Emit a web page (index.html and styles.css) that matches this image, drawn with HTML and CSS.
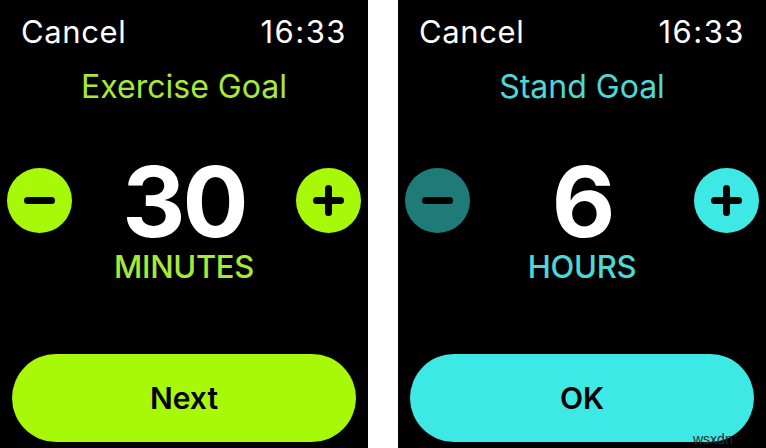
FILE: index.html
```html
<!DOCTYPE html>
<html lang="en">
<head>
    <meta charset="UTF-8">
    <meta name="viewport" content="width=device-width, initial-scale=1.0">
    <title>Activity Goals</title>
    <link rel="stylesheet" href="styles.css">
</head>
<body>
    <div class="screens">
        <!-- exercise goal -->
        <div class="screen exercise">
            <div class="topbar">
                <span class="cancel">Cancel</span>
                <span class="clock">16:33</span>
            </div>
            <div class="goal-title">Exercise Goal</div>
            <div class="stepper">
                <button class="step-btn">
                    <svg viewBox="0 0 65 65" width="65" height="65"><line x1="20.5" y1="32.5" x2="44.5" y2="32.5"/></svg>
                </button>
                <div class="value">30</div>
                <button class="step-btn">
                    <svg viewBox="0 0 65 65" width="65" height="65"><line x1="20.5" y1="32.5" x2="44.5" y2="32.5"/><line x1="32.5" y1="20.5" x2="32.5" y2="44.5"/></svg>
                </button>
            </div>
            <div class="unit">MINUTES</div>
            <button class="action-btn">Next</button>
        </div>

        <!-- stand goal -->
        <div class="screen stand">
            <div class="topbar">
                <span class="cancel">Cancel</span>
                <span class="clock">16:33</span>
            </div>
            <div class="goal-title">Stand Goal</div>
            <div class="stepper">
                <button class="step-btn dim">
                    <svg viewBox="0 0 65 65" width="65" height="65"><line x1="20.5" y1="32.5" x2="44.5" y2="32.5"/></svg>
                </button>
                <div class="value">6</div>
                <button class="step-btn">
                    <svg viewBox="0 0 65 65" width="65" height="65"><line x1="20.5" y1="32.5" x2="44.5" y2="32.5"/><line x1="32.5" y1="20.5" x2="32.5" y2="44.5"/></svg>
                </button>
            </div>
            <div class="unit">HOURS</div>
            <button class="action-btn">OK</button>
            <span class="watermark">wsxdn</span>
        </div>
    </div>
</body>
</html>
```

FILE: styles.css
```css
body {
    margin: 0;
    background: #fff;
    font-family: Inter, "Liberation Sans", sans-serif;
}
.screens {
    display: flex;
    gap: 30px;
    height: 448px;
}
.screen {
    position: relative;
    width: 368px;
    background: #000;
    color: #fff;
    display: flex;
    flex-direction: column;
}
.exercise {
    --accent: #a8f80a;
    --accent-text: #a6ea36;
}
.stand {
    --accent: #3ee8e4;
    --accent-text: #4cd9d6;
}
.topbar {
    display: flex;
    justify-content: space-between;
    padding: 0 21px 0 21px;
    margin-top: 16px;
    font-size: 31px;
    line-height: 31px;
}
.cancel {
    letter-spacing: 0.6px;
}
.clock {
    letter-spacing: 1.5px;
}
.goal-title {
    margin-top: 24px;
    text-align: center;
    color: var(--accent-text);
    font-size: 32px;
    line-height: 32px;
}
.stepper {
    display: flex;
    align-items: flex-start;
    justify-content: space-between;
    padding: 0 7px;
    margin-top: 59px;
}
.step-btn {
    width: 65px;
    height: 65px;
    margin-top: 6px;
    padding: 0;
    border: none;
    border-radius: 50%;
    background: var(--accent);
}
.step-btn.dim {
    background: #1f7b77;
}
.step-btn svg {
    display: block;
    stroke: #000;
    stroke-width: 7;
    stroke-linecap: round;
}
.value {
    font-size: 98px;
    line-height: 80px;
    font-weight: 700;
    letter-spacing: -3px;
}
.unit {
    margin-top: 9px;
    text-align: center;
    color: var(--accent-text);
    font-size: 31px;
    line-height: 32px;
    font-weight: 500;
    letter-spacing: -0.3px;
}
.action-btn {
    margin: auto 12px 6px;
    height: 88px;
    border: none;
    border-radius: 44px;
    background: var(--accent);
    color: #000;
    font-family: inherit;
    font-size: 30px;
    font-weight: 600;
}
.watermark {
    position: absolute;
    left: 295px;
    top: 431px;
    font-family: "Liberation Sans", sans-serif;
    font-size: 14px;
    color: #2b2b2b;
}
```
